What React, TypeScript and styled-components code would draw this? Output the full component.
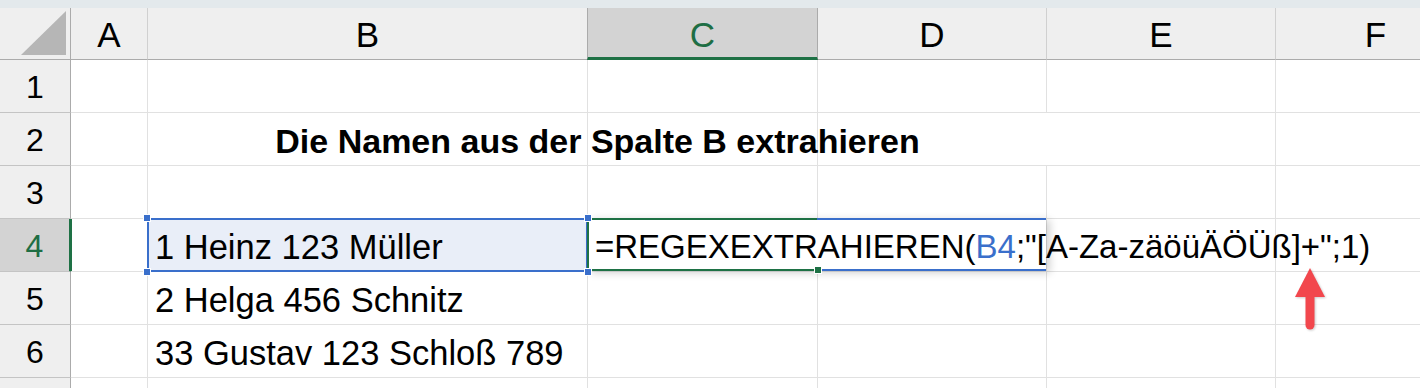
import React, { FC } from 'react';
import styled, { createGlobalStyle, css } from 'styled-components';

const GlobalStyle = createGlobalStyle`
  html, body {
    margin: 0;
    padding: 0;
    background: #ffffff;
    overflow: hidden;
  }
  body {
    font-family: "Liberation Sans", Arial, sans-serif;
    color: #000;
  }
`;

const Page = styled.div`
  width: 1420px;
  height: 388px;
  position: relative;
  overflow: hidden;
`;

const TopStrip = styled.div`
  height: 8px;
  background-color: #e3e9ec;
`;

const Sheet = styled.div`
  display: grid;
  grid-template-columns: 71px 77px 440px 230px 229px 229px 200px;
  grid-template-rows: 52px repeat(6, 53px) 20px;
`;

const Corner = styled.div`
  background-color: #efefef;
  border-right: 1px solid #ababab;
  border-bottom: 1px solid #ababab;
  display: flex;
  align-items: flex-end;
  justify-content: flex-end;
  padding: 0 3px 4px 0;
`;

type SelProps = { $selected?: boolean };

const ColHeader = styled.div<SelProps>`
  background-color: #efefef;
  border-right: 1px solid #d0d0d0;
  border-bottom: 1px solid #ababab;
  display: flex;
  align-items: center;
  justify-content: center;
  font-size: 35px;
  padding-top: 2px;
  ${p => p.$selected && css`
    background-color: #d3d3d3;
    color: #1e6e44;
    border-right: 1px solid #ababab;
    border-left: 1px solid #ababab;
    margin-left: -1px;
    border-bottom: 3px solid #1e7145;
    padding-top: 4px;
  `}
`;

const RowHeader = styled.div<SelProps>`
  background-color: #efefef;
  border-right: 1px solid #ababab;
  border-bottom: 1px solid #c4c4c4;
  display: flex;
  align-items: center;
  justify-content: center;
  font-size: 32px;
  padding-top: 2px;
  ${p => p.$selected && css`
    background-color: #d3d3d3;
    color: #1e6e44;
    border-right: 3px solid #1e7145;
    margin-right: -1px;
  `}
`;

const Cell = styled.div<{ $active?: boolean; $raised?: boolean }>`
  position: relative;
  border-right: 1px solid #e1e1e1;
  border-bottom: 1px solid #e1e1e1;
  display: flex;
  align-items: center;
  padding: 4px 0 0 7px;
  font-size: 34.5px;
  white-space: nowrap;
  ${p => p.$raised && 'z-index: 3;'}
  ${p => p.$active && css`
    background-color: #e9eef8;
    &::after {
      content: '';
      position: absolute;
      left: -1px;
      top: -1px;
      right: -1px;
      bottom: -1px;
      border: 2px solid #3a6fcb;
      pointer-events: none;
    }
  `}
`;

const TitleCell = styled(Cell)`
  grid-column: span 3;
  justify-content: center;
  padding-left: 0;
  border-right: none;
  background: linear-gradient(
    to right,
    transparent 439px,
    #e1e1e1 439px,
    #e1e1e1 440px,
    transparent 440px,
    transparent 669px,
    #e1e1e1 669px,
    #e1e1e1 670px,
    transparent 670px
  );
`;

const TitleText = styled.span`
  font-weight: 700;
  font-size: 34px;
`;

const Handle = styled.span<{ $x: 'left' | 'right'; $y: 'top' | 'bottom' }>`
  position: absolute;
  width: 6px;
  height: 6px;
  background-color: #3a6fcb;
  border: 1px solid #fff;
  z-index: 4;
  ${p => (p.$x === 'left' ? 'left: -5px;' : 'right: -5px;')}
  ${p => (p.$y === 'top' ? 'top: -5px;' : 'bottom: -5px;')}
`;

const Editor = styled.div`
  position: absolute;
  left: -1px;
  top: -1px;
  width: 459px;
  height: 53px;
  box-sizing: border-box;
  background-color: #fff;
  border-left: 2px solid #1e7145;
  border-top: 2px solid #3a6fcb;
  border-bottom: 2px solid #3a6fcb;
  box-shadow: 4px 2px 8px rgba(0, 0, 0, 0.18);
  display: flex;
  align-items: center;
  padding: 4px 0 0 6px;
  font-size: 33px;
  white-space: nowrap;
  overflow: visible;
  z-index: 3;
`;

const GreenEdge = styled.span<{ $pos: 'top' | 'bottom' }>`
  position: absolute;
  left: -2px;
  width: 230px;
  height: 2px;
  background-color: #1e7145;
  ${p => (p.$pos === 'top' ? 'top: -2px;' : 'bottom: -2px;')}
`;

const FillHandle = styled.span`
  position: absolute;
  left: 225px;
  bottom: -5px;
  width: 6px;
  height: 6px;
  background-color: #1e7145;
  border: 1px solid #fff;
`;

const RefText = styled.span`
  color: #3a6fcb;
`;

const Arrow = styled.svg`
  position: absolute;
  left: 1288px;
  top: 262px;
  z-index: 5;
  filter: drop-shadow(1px 1px 1px rgba(0, 0, 0, 0.2));
`;

const Triangle: FC = () => (
  <svg width="46" height="44" viewBox="0 0 46 44">
    <polygon points="45,0 45,44 0,44" fill="#b6b6b6" />
  </svg>
);

const cols = ['A', 'B', 'C', 'D', 'E', 'F'];

const rows: { n: number; b?: string }[] = [
  { n: 1 },
  { n: 2 },
  { n: 3 },
  { n: 4, b: '1 Heinz 123 Müller' },
  { n: 5, b: '2 Helga 456 Schnitz' },
  { n: 6, b: '33 Gustav 123 Schloß 789' },
];

export default function App() {
  return (
    <Page>
      <GlobalStyle />
      <TopStrip />
      <Sheet>
        <Corner>
          <Triangle />
        </Corner>
        {cols.map(c => (
          <ColHeader key={c} $selected={c === 'C'}>{c}</ColHeader>
        ))}

        {rows.map(r => {
          if (r.n === 2) {
            return (
              <React.Fragment key={r.n}>
                <RowHeader>{r.n}</RowHeader>
                <Cell />
                <TitleCell>
                  <TitleText>Die Namen aus der Spalte B extrahieren</TitleText>
                </TitleCell>
                <Cell />
                <Cell />
              </React.Fragment>
            );
          }
          const active = r.n === 4;
          return (
            <React.Fragment key={r.n}>
              <RowHeader $selected={active}>{r.n}</RowHeader>
              <Cell />
              <Cell $active={active}>
                {r.b}
                {active && (
                  <>
                    <Handle $x="left" $y="top" />
                    <Handle $x="left" $y="bottom" />
                    <Handle $x="right" $y="top" />
                    <Handle $x="right" $y="bottom" />
                  </>
                )}
              </Cell>
              <Cell $raised={active}>
                {active && (
                  <Editor>
                    <GreenEdge $pos="top" />
                    <GreenEdge $pos="bottom" />
                    <FillHandle />
                    =REGEXEXTRAHIEREN(<RefText>B4</RefText>;"[A-Za-zäöüÄÖÜß]+";1)
                  </Editor>
                )}
              </Cell>
              <Cell />
              <Cell />
              <Cell />
            </React.Fragment>
          );
        })}
        <RowHeader />
        <Cell />
        <Cell />
        <Cell />
        <Cell />
        <Cell />
        <Cell />
      </Sheet>
      <Arrow width="44" height="72" viewBox="0 0 44 72">
        <polygon points="22,6 7,35 37,35" fill="#f2474d" />
        <line x1="22" y1="33" x2="22" y2="63" stroke="#f2474d" strokeWidth="9" strokeLinecap="round" />
      </Arrow>
    </Page>
  );
}
